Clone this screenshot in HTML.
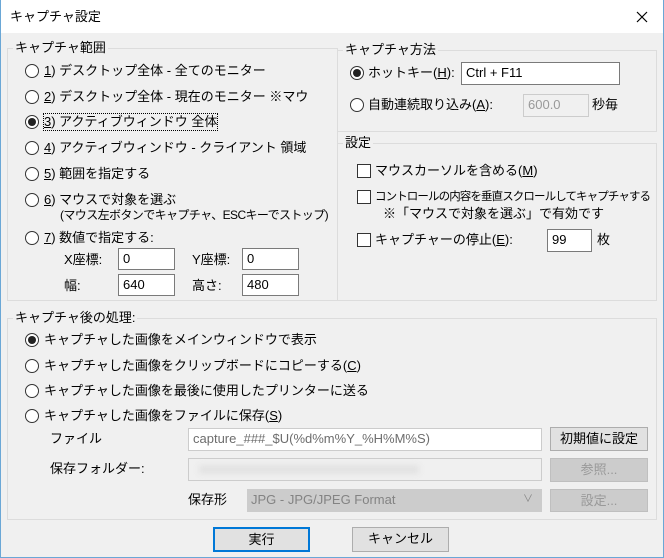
<!DOCTYPE html>
<html><head><meta charset="utf-8"><style>
*{box-sizing:border-box;margin:0;padding:0}
body{width:664px;height:558px;background:#f0f0f0;font-family:"Liberation Sans","Noto Sans CJK JP",sans-serif;font-size:13px;color:#000;position:relative;overflow:hidden}
.a{position:absolute;white-space:nowrap;line-height:16px}
.win{position:absolute;left:0;top:0;width:664px;height:558px;border:1px solid #6aa7d6;border-top:none}
.title{position:absolute;left:1px;top:0;width:662px;height:33px;background:#fff}
.grp{position:absolute;border:1px solid #dcdcdc}
.lbl{position:absolute;background:#f0f0f0;padding:0 2px;line-height:14px}
.r{position:absolute;width:14px;height:14px;border:1px solid #333;border-radius:50%;background:#fff}
.r.on::after{content:"";position:absolute;left:2px;top:2px;width:8px;height:8px;border-radius:50%;background:#222}
.c{position:absolute;width:14px;height:14px;border:1px solid #333;background:#fff}
.in{position:absolute;border:1px solid #7a7a7a;background:#fff;padding-left:4px;line-height:20px}
.dis{border-color:#ccc;background:#f0f0f0;color:#999}
.btn{position:absolute;border:1px solid #adadad;background:#e1e1e1;text-align:center;line-height:22px}
.btn.d{color:#999;background:#ccc;border-color:#bfbfbf}
u{text-decoration:underline}
</style></head><body>
<div class="title"></div>
<div class="win"></div>
<div class="a" style="left:10px;top:9px;font-size:13px">キャプチャ設定</div>
<svg class="a" style="left:636px;top:11px" width="12" height="12"><path d="M1 1L11 11M11 1L1 11" stroke="#000" stroke-width="1.2"/></svg>

<div class="grp" style="left:7px;top:48px;width:331px;height:253px"></div>
<div class="lbl" style="left:13px;top:41px">キャプチャ範囲</div>
<div class="r" style="left:25px;top:64px"></div><div class="a" style="left:44px;top:63px"><u>1</u>) デスクトップ全体 - 全てのモニター</div>
<div class="r" style="left:25px;top:90px"></div><div class="a" style="left:44px;top:89px"><u>2</u>) デスクトップ全体 - 現在のモニター ※マウ</div>
<div class="r on" style="left:25px;top:115px"></div><div class="a" style="left:44px;top:114px;outline:1px dotted #000"><u>3</u>) アクティブウィンドウ 全体</div>
<div class="r" style="left:25px;top:141px"></div><div class="a" style="left:44px;top:140px"><u>4</u>) アクティブウィンドウ - クライアント 領域</div>
<div class="r" style="left:25px;top:167px"></div><div class="a" style="left:44px;top:166px"><u>5</u>) 範囲を指定する</div>
<div class="r" style="left:25px;top:193px"></div><div class="a" style="left:44px;top:192px"><u>6</u>) マウスで対象を選ぶ</div>
<div class="a" style="left:60px;top:207px;font-size:12px;letter-spacing:-0.6px">(マウス左ボタンでキャプチャ、ESCキーでストップ)</div>
<div class="r" style="left:25px;top:231px"></div><div class="a" style="left:44px;top:230px"><u>7</u>) 数値で指定する:</div>
<div class="a" style="left:64px;top:252px">X座標:</div><div class="in" style="left:118px;top:248px;width:57px;height:22px">0</div>
<div class="a" style="left:192px;top:252px">Y座標:</div><div class="in" style="left:242px;top:248px;width:57px;height:22px">0</div>
<div class="a" style="left:64px;top:278px">幅:</div><div class="in" style="left:118px;top:274px;width:57px;height:22px">640</div>
<div class="a" style="left:192px;top:278px">高さ:</div><div class="in" style="left:242px;top:274px;width:57px;height:22px">480</div>

<div class="grp" style="left:337px;top:50px;width:320px;height:82px"></div>
<div class="lbl" style="left:343px;top:43px">キャプチャ方法</div>
<div class="r on" style="left:350px;top:66px"></div><div class="a" style="left:368px;top:65px">ホットキー(<u>H</u>):</div>
<div class="in" style="left:461px;top:62px;width:159px;height:23px">Ctrl + F11</div>
<div class="r" style="left:350px;top:98px"></div><div class="a" style="left:368px;top:97px">自動連続取り込み(<u>A</u>):</div>
<div class="in dis" style="left:523px;top:94px;width:66px;height:23px">600.0</div>
<div class="a" style="left:592px;top:97px">秒毎</div>

<div class="grp" style="left:337px;top:143px;width:320px;height:158px"></div>
<div class="lbl" style="left:343px;top:136px">設定</div>
<div class="c" style="left:357px;top:164px"></div><div class="a" style="left:375px;top:163px">マウスカーソルを含める(<u>M</u>)</div>
<div class="c" style="left:357px;top:190px"></div><div class="a" style="left:375px;top:189px;font-size:11.5px;letter-spacing:-0.9px;width:280px;overflow:hidden">コントロールの内容を垂直スクロールしてキャプチャする</div>
<div class="a" style="left:383px;top:206px">※「マウスで対象を選ぶ」で有効です</div>
<div class="c" style="left:357px;top:233px"></div><div class="a" style="left:375px;top:232px">キャプチャーの停止(<u>E</u>):</div>
<div class="in" style="left:547px;top:229px;width:45px;height:23px">99</div>
<div class="a" style="left:597px;top:232px">枚</div>

<div class="grp" style="left:7px;top:318px;width:650px;height:202px"></div>
<div class="lbl" style="left:13px;top:311px">キャプチャ後の処理:</div>
<div class="r on" style="left:25px;top:333px"></div><div class="a" style="left:44px;top:332px">キャプチャした画像をメインウィンドウで表示</div>
<div class="r" style="left:25px;top:359px"></div><div class="a" style="left:44px;top:358px">キャプチャした画像をクリップボードにコピーする(<u>C</u>)</div>
<div class="r" style="left:25px;top:384px"></div><div class="a" style="left:44px;top:383px">キャプチャした画像を最後に使用したプリンターに送る</div>
<div class="r" style="left:25px;top:409px"></div><div class="a" style="left:44px;top:408px">キャプチャした画像をファイルに保存(<u>S</u>)</div>
<div class="a" style="left:50px;top:431px">ファイル</div>
<div class="in" style="left:188px;top:428px;width:354px;height:23px;border-color:#ccc;color:#6d6d6d">capture_###_$U(%d%m%Y_%H%M%S)</div>
<div class="btn" style="left:550px;top:427px;width:98px;height:24px">初期値に設定</div>
<div class="a" style="left:50px;top:461px">保存フォルダー:</div>
<div class="in" style="left:188px;top:458px;width:354px;height:23px;border-color:#ccc;background:#f0f0f0"><div style="position:absolute;left:10px;top:6px;width:220px;height:9px;background:#e2e2e2;filter:blur(3px)"></div></div>
<div class="btn d" style="left:550px;top:458px;width:98px;height:24px">参照...</div>
<div class="a" style="left:188px;top:492px">保存形</div>
<div class="in" style="left:247px;top:489px;width:295px;height:23px;background:#ccc;border-color:#ccc;color:#838383;padding-left:3px">JPG - JPG/JPEG Format<span style="position:absolute;right:8px;top:0;font-size:10px">&#8744;</span></div>
<div class="btn d" style="left:550px;top:489px;width:98px;height:23px">設定...</div>

<div class="btn" style="left:213px;top:527px;width:97px;height:25px;border:2px solid #0078d7">実行</div>
<div class="btn" style="left:352px;top:527px;width:97px;height:25px">キャンセル</div>
</body></html>
